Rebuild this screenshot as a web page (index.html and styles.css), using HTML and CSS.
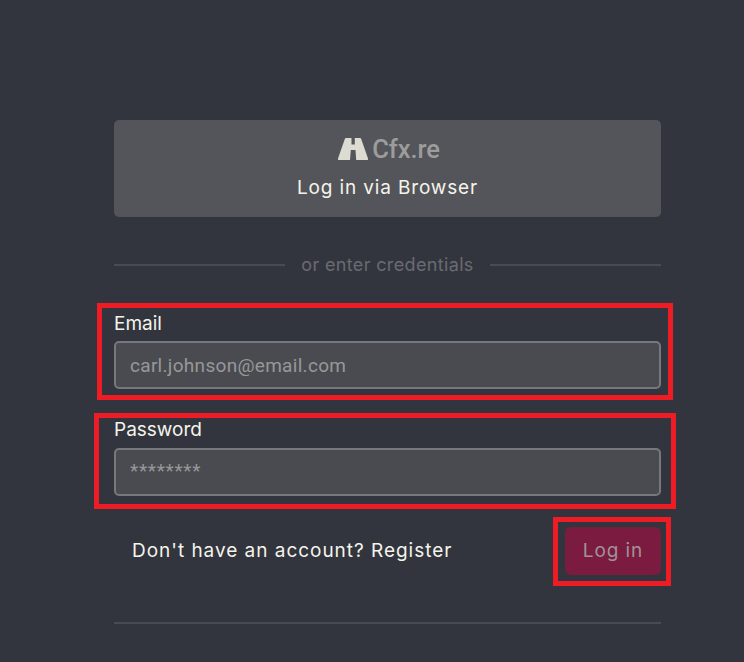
FILE: index.html
```html
<!DOCTYPE html>
<html lang="en">
<head>
<meta charset="utf-8">
<title>Log in</title>
<link rel="stylesheet" href="styles.css">
</head>
<body>
<main class="panel">
  <button class="browser-btn" type="button">
    <span class="logo">
      <svg class="logo-mark" width="30" height="22" viewBox="0 0 30 22" aria-hidden="true"><path fill="#dcdcd2" d="M7 0.500Q7.200 0 8 0H13.500V6.500H16.800V0H22Q22.800 0 23 0.500L30 20.500Q30.300 22 29 22H18.200L17.500 12H12.800L12 22H1Q-0.300 22 0 20.500Z"/></svg>
      <span class="logo-text">Cfx.re</span>
    </span>
    <span class="browser-label">Log in via Browser</span>
  </button>
  <div class="divider"><span>or enter credentials</span></div>
  <div class="field field-email">
    <label for="email">Email</label>
    <input id="email" type="text" placeholder="carl.johnson@email.com">
    <span class="mark mark-email"></span>
  </div>
  <div class="field field-password">
    <label for="password">Password</label>
    <input id="password" type="text" placeholder="********">
    <span class="mark mark-password"></span>
  </div>
  <div class="actions">
    <span class="register">Don't have an account? Register</span>
    <button class="login-btn" type="button">Log in<span class="mark mark-login"></span></button>
  </div>
  <hr class="rule">
</main>
</body>
</html>
```
FILE: styles.css
```css
html, body {
  margin: 0;
  height: 662px;
  overflow: hidden;
  background: #32353e;
}
body {
  font-family: "Inter", "Liberation Sans", sans-serif;
  color: #f4f4ea;
}
.panel {
  width: 547px;
  margin-left: 114px;
  padding-top: 120px;
}
.browser-btn {
  display: flex;
  flex-direction: column;
  align-items: center;
  width: 100%;
  height: 97px;
  padding: 17px 0 0;
  border: 0;
  border-radius: 5px;
  background: #54555b;
  color: #f4f4ea;
  font: inherit;
}
.logo {
  display: flex;
  align-items: center;
  gap: 4px;
  height: 24px;
  margin-left: 3px;
}
.logo-text {
  font-family: "Roboto", sans-serif;
  font-size: 25.5px;
  letter-spacing: -0.1px;
  font-weight: 500;
  color: #9c9d9b;
}
.browser-label {
  margin-top: 15px;
  font-size: 19px;
  line-height: 24px;
  letter-spacing: 0.85px;
}
.divider {
  display: flex;
  align-items: center;
  gap: 16px;
  height: 24px;
  margin-top: 35px;
  color: #696b71;
  font-size: 18px;
  letter-spacing: 0.35px;
}
.divider::before, .divider::after {
  content: "";
  flex: 1;
  height: 2px;
  margin-top: 1px;
  background: #484b53;
}
.field {
  position: relative;
  display: flex;
  flex-direction: column;
}
.field-email { margin-top: 36px; }
.field-password { margin-top: 29px; }
.field label {
  height: 29px;
  font-size: 19px;
  line-height: 24px;
}
.field-password label { height: 30px; }
.field input {
  box-sizing: border-box;
  width: 100%;
  height: 48px;
  padding: 0 14px;
  border: 2px solid #77787b;
  border-radius: 5px;
  background: #4a4b50;
  color: #f4f4ea;
  font-family: "Roboto", sans-serif;
  font-size: 19px;
  letter-spacing: 0.3px;
  outline: none;
}
.field input::placeholder {
  color: #97989a;
  opacity: 1;
}
#password {
  padding-bottom: 4px;
  letter-spacing: 0.7px;
}
.actions {
  display: flex;
  align-items: center;
  justify-content: space-between;
  margin-top: 31px;
  padding-left: 18px;
}
.register {
  padding-bottom: 2px;
  font-size: 19px;
  letter-spacing: 0.97px;
}
.login-btn {
  position: relative;
  width: 96px;
  height: 48px;
  padding: 0 0 2px;
  border: 0;
  border-radius: 6px;
  background: #7a1b3f;
  color: #a09298;
  font-family: "Inter", sans-serif;
  font-size: 19px;
  letter-spacing: 0.9px;
}
.rule {
  height: 2px;
  margin: 47px 0 0;
  border: 0;
  background: #484b53;
}
.mark {
  position: absolute;
  box-sizing: border-box;
  border: 5px solid #ee1c25;
  pointer-events: none;
}
.mark-email { left: -17px; right: -12px; bottom: -11px; height: 97px; }
.mark-password { left: -20px; right: -15px; bottom: -13px; height: 96px; }
.mark-login { left: -12px; right: -10px; top: -10px; bottom: -11px; }
```
